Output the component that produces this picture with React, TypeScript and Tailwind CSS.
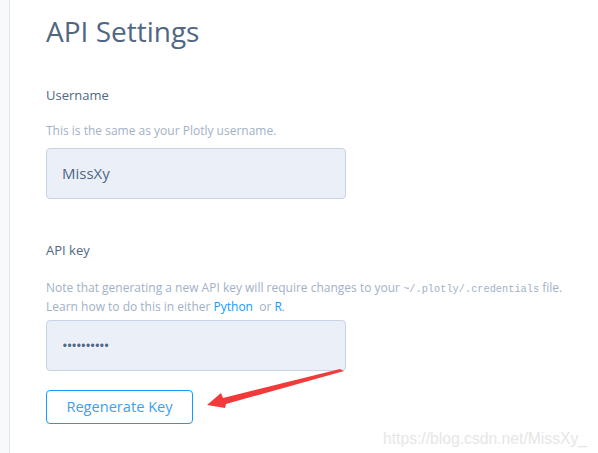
export default function App() {
  return (
    <div className="relative flex h-[453px] w-[598px] overflow-hidden bg-white" style={{ fontFamily: '"Open Sans", sans-serif' }}>
      <div className="w-[10px] shrink-0 border-r border-[#e3e7ed] bg-[#f8f9fb]" />
      <div className="flex flex-col pl-[36px] pt-[12px]">
        <h1 className="text-[28px] leading-[38px] text-[#506784]">API Settings</h1>
        <div className="mt-[36px] text-[13px] leading-[18px] text-[#506784]">Username</div>
        <div className="mt-[19px] text-[12px] leading-[16px] text-[#a2b1c6]">This is the same as your Plotly username.</div>
        <div className="mt-[9px] flex h-[51px] w-[300px] items-center rounded-[4px] border border-[#c8d4e3] bg-[#ebf0f8] pl-[15px] text-[15px] text-[#506784]">MissXy</div>
        <div className="mt-[42px] text-[13px] leading-[18px] text-[#506784]">API key</div>
        <div className="mt-[20px] text-[12px] leading-[17px] text-[#a2b1c6]">
          Note that generating a new API key will require changes to your{' '}
          <span className="text-[10.3px]" style={{ fontFamily: '"Liberation Mono", monospace' }}>~/.plotly/.credentials</span> file.
          <br />
          Learn how to do this in either <span className="text-[#119dff]">Python</span>&nbsp; or <span className="text-[#119dff]">R</span>.
        </div>
        <div className="mt-[5px] flex h-[51px] w-[300px] items-center rounded-[4px] border border-[#c8d4e3] bg-[#ebf0f8] pl-[15px] text-[15px] tracking-[-1px] text-[#506784]">••••••••••</div>
        <button className="mt-[19px] h-[34px] w-[147px] rounded-[4px] border border-[#119dff] bg-white text-[14.6px] text-[#3c9ff0]">Regenerate Key</button>
      </div>
      <svg className="absolute left-0 top-0" width="598" height="453" viewBox="0 0 598 453">
        <polygon points="207,405 221,393 223,398 340,369 344,371 226,404 225,408" fill="#f23a3a" />
      </svg>
      <div className="absolute left-[383px] top-[427px] whitespace-nowrap text-[15.7px] text-[#e6e6e6]" style={{ fontFamily: '"Liberation Sans", sans-serif' }}>https://blog.csdn.net/MissXy_</div>
    </div>
  );
}
